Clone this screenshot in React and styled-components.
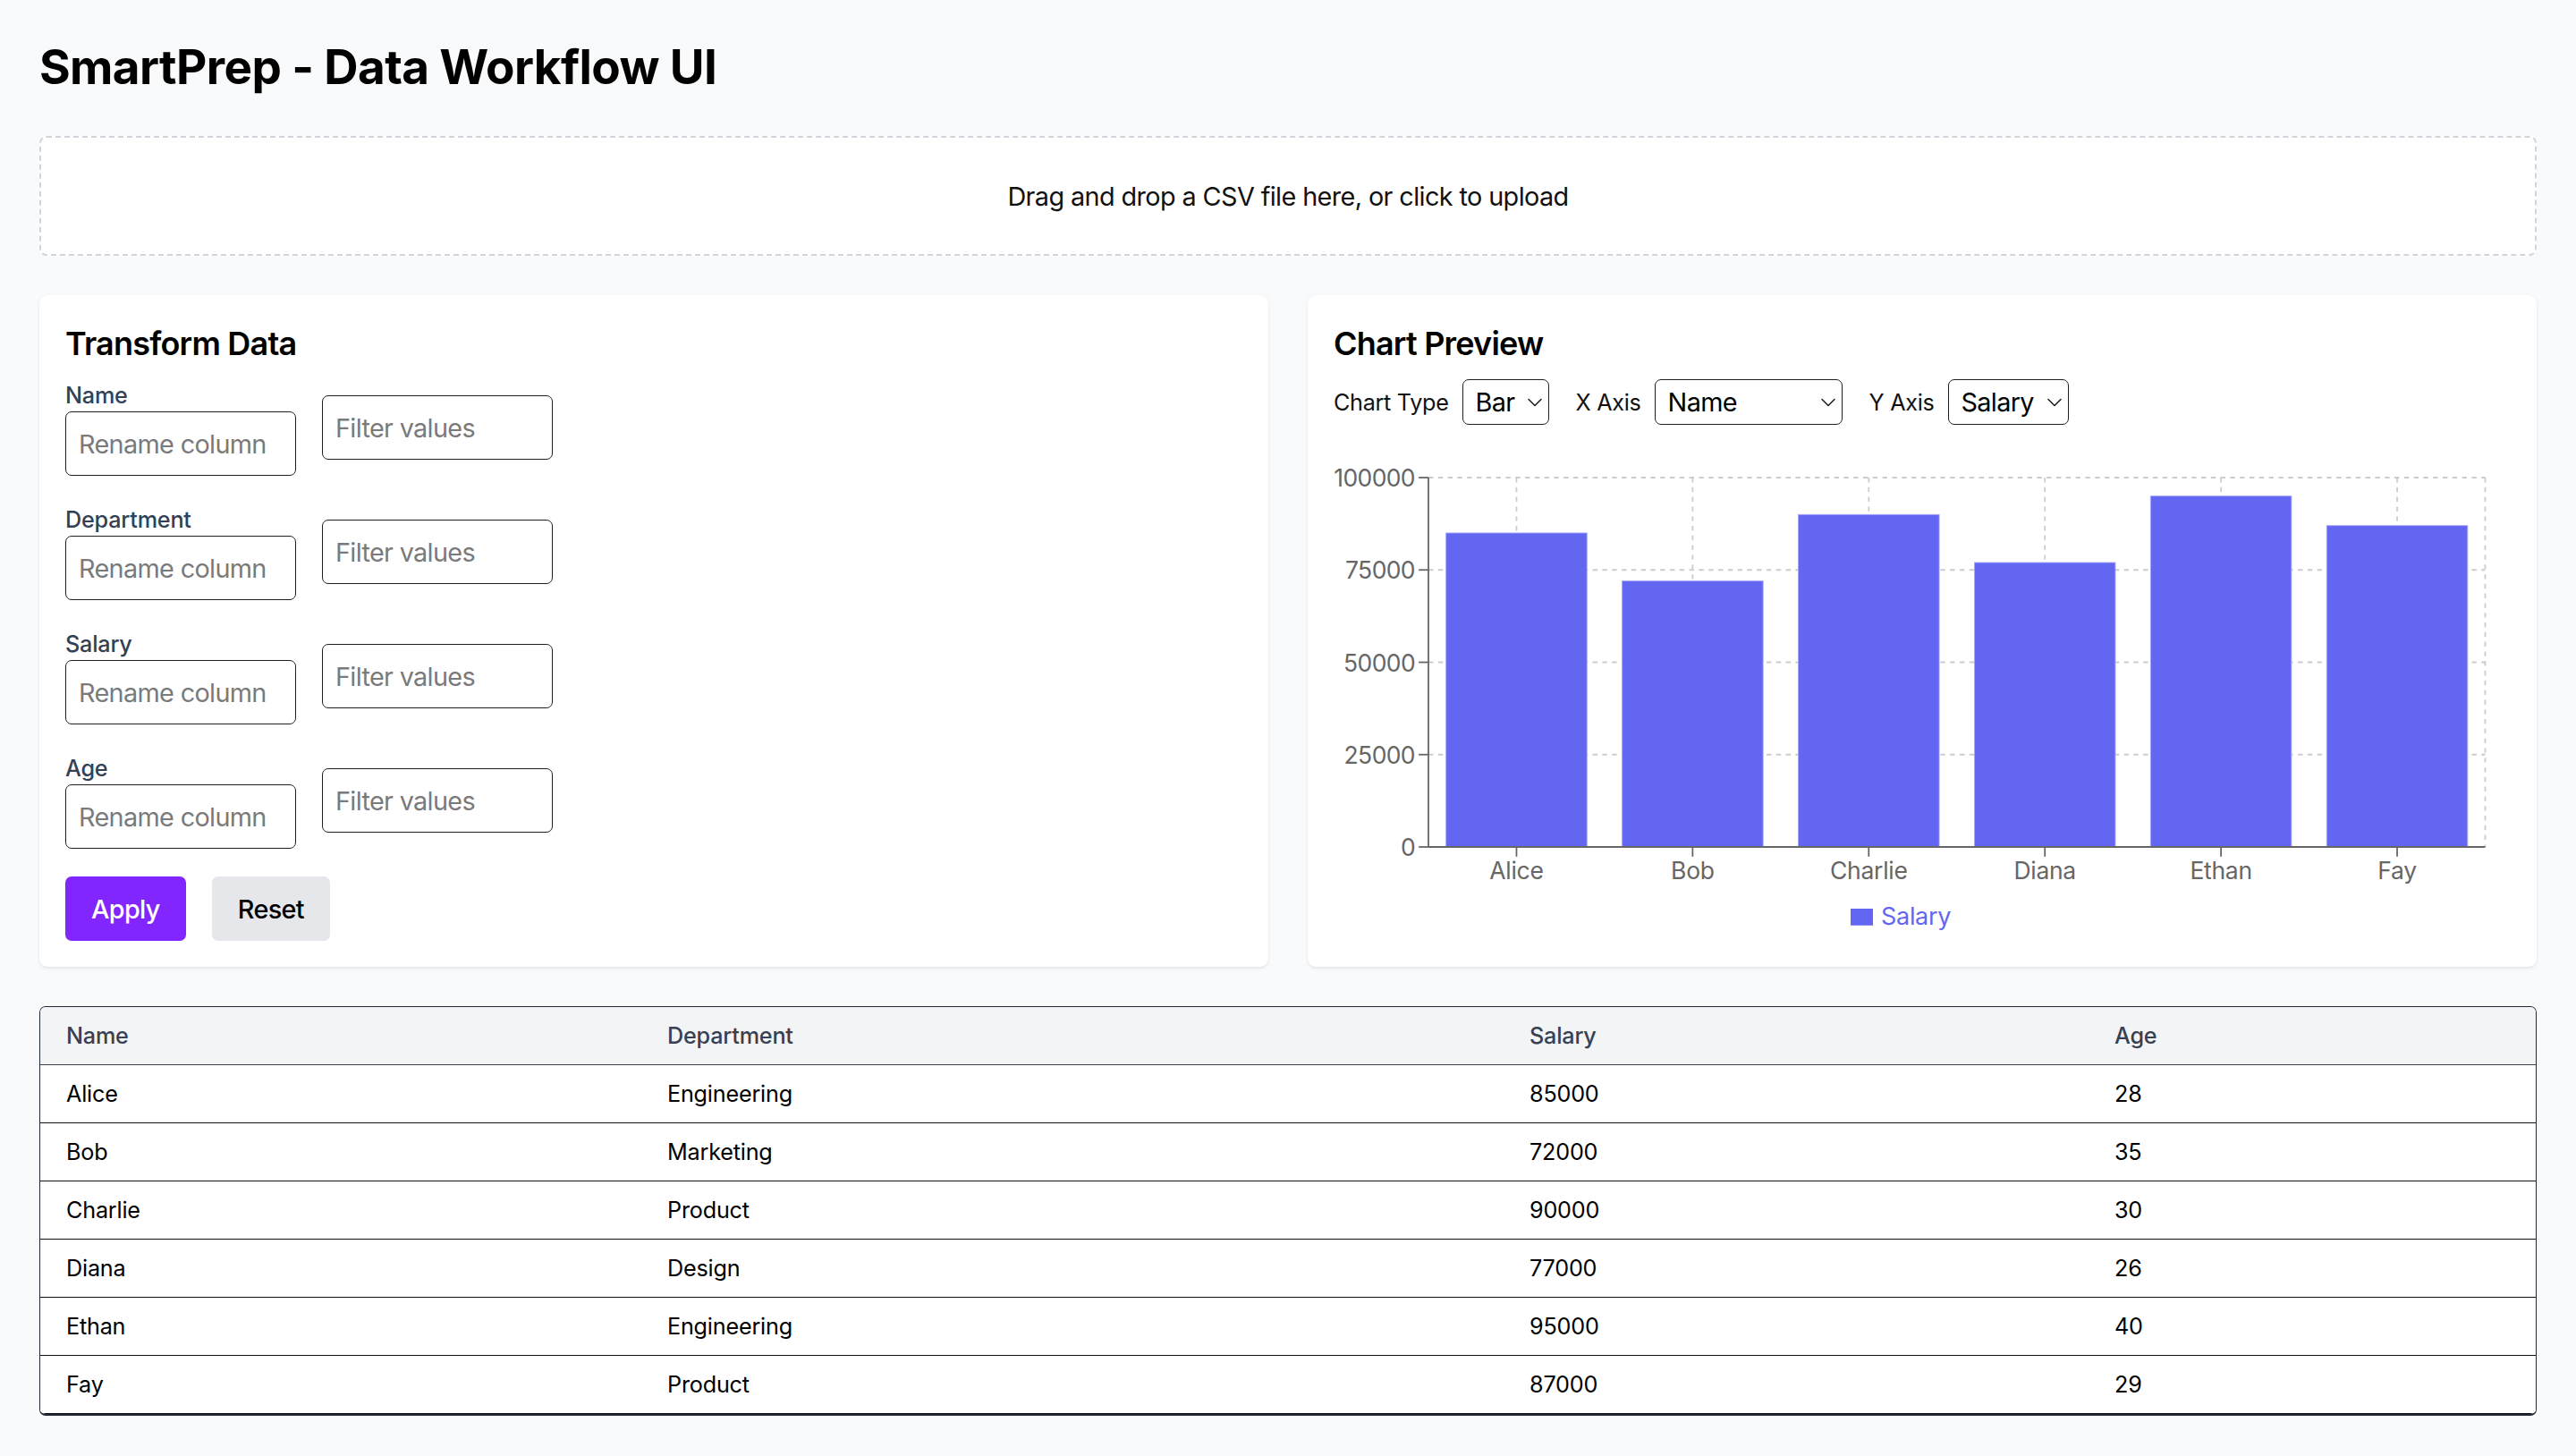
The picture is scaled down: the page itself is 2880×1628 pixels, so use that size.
import React from "react";
import styled, { createGlobalStyle } from "styled-components";

const GlobalStyle = createGlobalStyle`
  html, body { margin: 0; padding: 0; background: #f9fafb; }
  body { font-family: Inter, "Noto Sans", "Liberation Sans", sans-serif; color: #111; }
  * { box-sizing: border-box; }
`;

const Page = styled.div`
  padding: 44px 44px 44px 44px;
  min-height: 1628px;
`;

const Title = styled.h1`
  margin: 0 0 46px 0;
  font-size: 53px;
  line-height: 62px;
  font-weight: 700;
  letter-spacing: -0.6px;
  color: #000;
`;

const DropZone = styled.div`
  height: 134px;
  border: 2px dashed #d1d5db;
  border-radius: 8px;
  background: #fff;
  display: flex;
  align-items: center;
  justify-content: center;
  font-size: 28.8px;
  letter-spacing: -0.6px;
  color: #111;
`;

const Grid = styled.div`
  margin-top: 44px;
  display: grid;
  grid-template-columns: 1fr 1fr;
  gap: 44px;
`;

const Card = styled.section`
  background: #fff;
  border-radius: 9px;
  box-shadow: 0 1.8px 3.6px rgba(0, 0, 0, 0.08), 0 0 1px rgba(0, 0, 0, 0.05);
  padding: 29px 29px;
`;

const CardTitle = styled.h2`
  margin: 0 0 15px 0;
  font-size: 36px;
  line-height: 50px;
  font-weight: 600;
  letter-spacing: -0.8px;
  color: #000;
`;

const FieldRow = styled.div`
  display: flex;
  align-items: center;
  gap: 29px;
  margin-bottom: 31px;
`;

const FieldCol = styled.div`
  display: flex;
  flex-direction: column;
`;

const Label = styled.label`
  font-size: 25.2px;
  line-height: 36px;
  font-weight: 500;
  letter-spacing: -0.2px;
  color: #334155;
`;

const TextInput = styled.input`
  width: 258px;
  height: 72px;
  border: 1.8px solid #1f1f1f;
  border-radius: 7px;
  padding: 0 14px;
  font-family: inherit;
  font-size: 28.8px;
  letter-spacing: -0.65px;
  color: #111;
  background: #fff;
  outline: none;
  &::placeholder { color: #7a7a7a; }
`;

const ButtonRow = styled.div`
  display: flex;
  gap: 29px;
`;

const Button = styled.button`
  height: 72px;
  padding: 0 29px;
  border: none;
  border-radius: 7px;
  font-family: inherit;
  font-size: 28.8px;
  font-weight: 500;
  letter-spacing: -0.65px;
  cursor: pointer;
  background: ${(p) => (p.$primary ? "#8126ff" : "#e5e7eb")};
  color: ${(p) => (p.$primary ? "#fff" : "#000")};
`;

const Controls = styled.div`
  display: flex;
  align-items: center;
`;

const ControlGroup = styled.div`
  display: flex;
  align-items: center;
  gap: 15px;
  margin-right: 30px;
`;

const ControlLabel = styled.span`
  font-size: 25.2px;
  line-height: 36px;
  letter-spacing: -0.3px;
  color: #111;
`;

const SelectWrap = styled.div`
  position: relative;
  width: ${(p) => p.$w}px;
  height: 51px;
`;

const Select = styled.select`
  appearance: none;
  -webkit-appearance: none;
  width: 100%;
  height: 100%;
  border: 1.8px solid #1f1f1f;
  border-radius: 7px;
  padding: 0 28px 0 14px;
  background: #fff;
  font-family: inherit;
  font-size: 28.8px;
  letter-spacing: -0.65px;
  color: #000;
  outline: none;
`;

const Chevron = styled.svg`
  position: absolute;
  right: 7px;
  top: 50%;
  transform: translateY(-50%);
  pointer-events: none;
`;

const ChartSvg = styled.svg`
  display: block;
  margin-top: 29px;
  overflow: visible;
  font-family: Inter, "Noto Sans", "Liberation Sans", sans-serif;
`;

const TableWrap = styled.div`
  margin-top: 44px;
  border: 1.8px solid #1f2937;
  border-bottom-width: 2px;
  border-radius: 7px;
  overflow: hidden;
  background: #fff;
`;

const Table = styled.table`
  width: 100%;
  border-collapse: collapse;
  table-layout: fixed;
`;

const Th = styled.th`
  text-align: left;
  font-weight: 500;
  font-size: 25.2px;
  line-height: 36px;
  letter-spacing: -0.2px;
  color: #374151;
  padding: 14px 29px;
  background: #f3f4f6;
  border-bottom: 1.8px solid #374151;
`;

const Td = styled.td`
  font-size: 25.2px;
  line-height: 36px;
  letter-spacing: -0.2px;
  color: #000;
  padding: 14px 29px;
  border-bottom: 1.8px solid #111;
`;

const Tr = styled.tr`
  background: #fff;
`;

const data = [
  { name: "Alice", dept: "Engineering", salary: 85000, age: 28 },
  { name: "Bob", dept: "Marketing", salary: 72000, age: 35 },
  { name: "Charlie", dept: "Product", salary: 90000, age: 30 },
  { name: "Diana", dept: "Design", salary: 77000, age: 26 },
  { name: "Ethan", dept: "Engineering", salary: 95000, age: 40 },
  { name: "Fay", dept: "Product", salary: 87000, age: 29 },
];

const columns = ["Name", "Department", "Salary", "Age"];

function ChevronIcon() {
  return (
    <Chevron width="18" height="11" viewBox="0 0 18 11">
      <path d="M2 2 L9 9 L16 2" fill="none" stroke="#222" strokeWidth="1.6" strokeLinecap="round" strokeLinejoin="round" />
    </Chevron>
  );
}

function ControlSelect({ label, w, value, options }) {
  return (
    <ControlGroup>
      <ControlLabel>{label}</ControlLabel>
      <SelectWrap $w={w}>
        <Select defaultValue={value}>
          {options.map((o) => (
            <option key={o}>{o}</option>
          ))}
        </Select>
        <ChevronIcon />
      </SelectWrap>
    </ControlGroup>
  );
}

function BarChart() {
  const W = 1316;
  const H = 540;
  const L = 106;
  const R = 1287.5;
  const T = 30;
  const B = 443;
  const plotH = B - T;
  const cat = (R - L) / data.length;
  const barW = cat * 0.8;
  const yTicks = [0, 25000, 50000, 75000, 100000];
  const yOf = (v) => B - (v / 100000) * plotH;
  const dash = "5.4 5.4";
  return (
    <ChartSvg width={W} height={H} viewBox={`0 0 ${W} ${H}`}>
      {yTicks.slice(1).map((v) => (
        <line key={v} x1={L} x2={R} y1={yOf(v)} y2={yOf(v)} stroke="#ccc" strokeWidth="1.8" strokeDasharray={dash} />
      ))}
      {data.map((d, i) => (
        <line key={d.name} x1={L + cat * (i + 0.5)} x2={L + cat * (i + 0.5)} y1={T} y2={B} stroke="#ccc" strokeWidth="1.8" strokeDasharray={dash} />
      ))}
      <line x1={R} x2={R} y1={T} y2={B} stroke="#ccc" strokeWidth="1.8" strokeDasharray={dash} />
      {data.map((d, i) => (
        <rect key={d.name} x={L + cat * i + cat * 0.1} y={yOf(d.salary)} width={barW} height={B - yOf(d.salary)} fill="#6366f1" stroke="#a5a8f7" strokeWidth="0.9" />
      ))}
      <line x1={L} x2={L} y1={T} y2={B} stroke="#666" strokeWidth="1.8" />
      <line x1={L} x2={R} y1={B} y2={B} stroke="#666" strokeWidth="1.8" />
      {yTicks.map((v) => (
        <g key={v}>
          <line x1={L - 10.8} x2={L} y1={yOf(v)} y2={yOf(v)} stroke="#666" strokeWidth="1.8" />
          <text x={L - 15} y={yOf(v)} textAnchor="end" dominantBaseline="central" fontSize="26.5" letterSpacing="-0.6" fill="#666">
            {v}
          </text>
        </g>
      ))}
      {data.map((d, i) => (
        <g key={d.name}>
          <line x1={L + cat * (i + 0.5)} x2={L + cat * (i + 0.5)} y1={B} y2={B + 10.8} stroke="#666" strokeWidth="1.8" />
          <text x={L + cat * (i + 0.5)} y={478.5} textAnchor="middle" fontSize="26.5" letterSpacing="-0.3" fill="#666">
            {d.name}
          </text>
        </g>
      ))}
      <rect x="578" y="512" width="25" height="18.75" fill="#6366f1" />
      <text x="612" y="529.5" fontSize="27" letterSpacing="-0.3" fill="#6366f1">
        Salary
      </text>
    </ChartSvg>
  );
}

export default function App() {
  return (
    <>
      <GlobalStyle />
      <Page>
        <Title>SmartPrep - Data Workflow UI</Title>
        <DropZone>Drag and drop a CSV file here, or click to upload</DropZone>
        <Grid>
          <Card>
            <CardTitle>Transform Data</CardTitle>
            {columns.map((c) => (
              <FieldRow key={c}>
                <FieldCol>
                  <Label>{c}</Label>
                  <TextInput placeholder="Rename column" />
                </FieldCol>
                <TextInput placeholder="Filter values" />
              </FieldRow>
            ))}
            <ButtonRow>
              <Button $primary>Apply</Button>
              <Button>Reset</Button>
            </ButtonRow>
          </Card>
          <Card>
            <CardTitle>Chart Preview</CardTitle>
            <Controls>
              <ControlSelect label="Chart Type" w={97} value="Bar" options={["Bar", "Line", "Pie"]} />
              <ControlSelect label="X Axis" w={210} value="Name" options={columns} />
              <ControlSelect label="Y Axis" w={135} value="Salary" options={["Salary", "Age"]} />
            </Controls>
            <BarChart />
          </Card>
        </Grid>
        <TableWrap>
          <Table>
            <colgroup>
              <col style={{ width: 672 }} />
              <col style={{ width: 964 }} />
              <col style={{ width: 654 }} />
              <col />
            </colgroup>
            <thead>
              <tr>
                {columns.map((c) => (
                  <Th key={c}>{c}</Th>
                ))}
              </tr>
            </thead>
            <tbody>
              {data.map((d) => (
                <Tr key={d.name}>
                  <Td>{d.name}</Td>
                  <Td>{d.dept}</Td>
                  <Td>{d.salary}</Td>
                  <Td>{d.age}</Td>
                </Tr>
              ))}
            </tbody>
          </Table>
        </TableWrap>
      </Page>
    </>
  );
}
